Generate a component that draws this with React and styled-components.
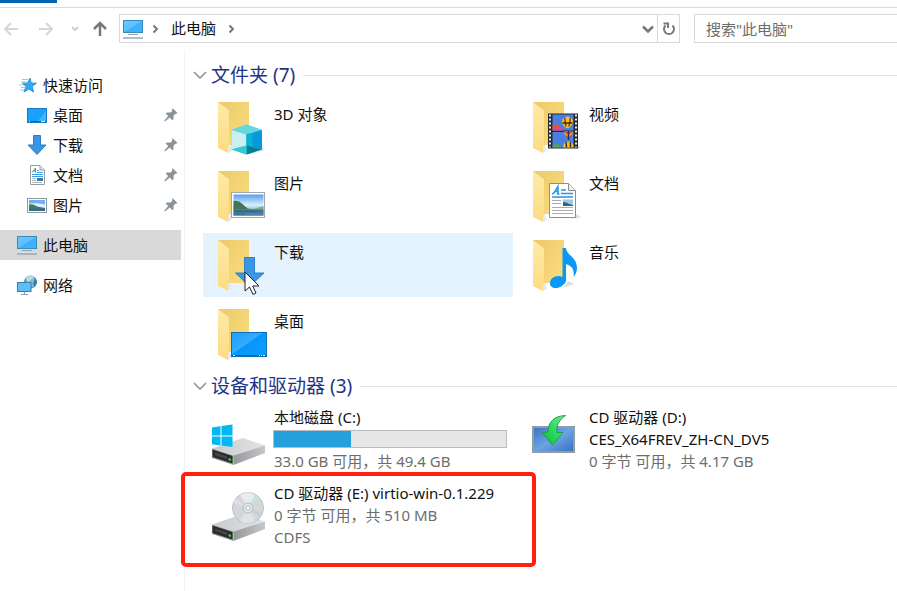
import React from "react";
import styled, { createGlobalStyle } from "styled-components";

const Global = createGlobalStyle`
  * { box-sizing: border-box; }
  body {
    margin: 0;
    background: #fff;
    color: #111;
    font-family: "Noto Sans", "Noto Sans CJK SC", sans-serif;
    font-size: 15px;
    line-height: 22px;
    overflow: hidden;
  }
  button, input { font: inherit; color: inherit; }
  svg { display: block; flex: none; }
`;

const Window = styled.div`
  display: flex;
  flex-direction: column;
  min-height: 100vh;
`;

const TabStrip = styled.header`
  height: 8px;
  border-bottom: 1px solid #dadbdc;
`;

const ActiveTab = styled.div`
  width: 57px;
  height: 3px;
  background: #0063b1;
`;

const Toolbar = styled.nav`
  display: flex;
  align-items: center;
  height: 42px;
  padding: 0 0 1px;
`;

const NavButtons = styled.div`
  display: flex;
  align-items: center;
  width: 119px;
  flex: none;
`;

const IconButton = styled.button`
  display: flex;
  align-items: center;
  justify-content: center;
  width: ${(p) => p.$width}px;
  height: 27px;
  padding: 0;
  border: 0;
  background: none;
`;

const AddressBar = styled.div`
  display: flex;
  align-items: center;
  flex: 1;
  height: 29px;
  border: 1px solid #d9d9d9;
`;

const Crumb = styled.button`
  border: 0;
  background: none;
  padding: 0 8px 2px 6px;
`;

const Spacer = styled.div`
  flex: 1;
`;

const RefreshSlot = styled.div`
  border-left: 1px solid #d9d9d9;
`;

const Search = styled.input`
  width: 203px;
  height: 29px;
  margin-left: 14px;
  padding: 0 11px;
  border: 1px solid #d9d9d9;
  border-right: 0;
  outline: 0;
  background: #fff;
  &::placeholder { color: #6d6d6d; opacity: 1; }
`;

const Body = styled.div`
  display: flex;
  flex: 1;
`;

const Sidebar = styled.aside`
  display: flex;
  flex-direction: column;
  gap: 10px;
  width: 185px;
  flex: none;
  padding: 20px 3px 0 0;
  border-right: 1px solid #f3f3f3;
`;

const SideGroup = styled.div`
  display: flex;
  flex-direction: column;
`;

const SideLink = styled.a`
  display: flex;
  align-items: center;
  gap: 6px;
  height: 30px;
  padding: 0 3px 0 ${(p) => (p.$nested ? 27 : 17)}px;
  background: ${(p) => (p.$current ? "#d9d9d9" : "transparent")};
  color: inherit;
  text-decoration: none;
`;

const Main = styled.main`
  flex: 1;
  min-width: 0;
  padding: 13px 0 0 7px;
`;

const Section = styled.section`
  margin-bottom: 8px;
`;

const SectionHead = styled.div`
  display: flex;
  align-items: center;
  height: 24px;
  &::after {
    content: "";
    flex: 1;
    height: 1px;
    margin-left: 8px;
    background: #e2e2e2;
  }
`;

const SectionTitle = styled.h2`
  margin: 0 0 0 4px;
  color: #1e3287;
  font-size: 19px;
  font-weight: 400;
  line-height: 24px;
`;

const Tiles = styled.div`
  display: grid;
  grid-template-columns: repeat(2, 310px);
  gap: 5px;
  padding: ${(p) => p.$top}px 0 0 11px;
`;

const TileBox = styled.button`
  position: relative;
  display: flex;
  align-items: flex-start;
  gap: 7px;
  height: ${(p) => (p.$tall ? 71 : 64)}px;
  padding: 0 6px 0 8px;
  border: 0;
  background: ${(p) => (p.$hover ? "#e5f3ff" : "transparent")};
  text-align: left;
`;

const IconSlot = styled.span`
  flex: none;
  padding-top: ${(p) => (p.$tall ? 6 : 4)}px;
`;

const TileText = styled.span`
  display: flex;
  flex-direction: column;
  flex: 1;
  padding-top: ${(p) => (p.$tall ? 0 : 8)}px;
  white-space: nowrap;
`;

const Detail = styled.span`
  color: #6d6d6d;
`;

const Meter = styled.span`
  display: block;
  height: 18px;
  margin: 2px 0;
  margin-left: -1px;
  border: 1px solid #bcbcbc;
  background: #e6e6e6;
`;

const MeterFill = styled.span`
  display: block;
  height: 100%;
  background: #26a0da;
`;

const Highlight = styled.span`
  position: absolute;
  inset: -10px -23px -14px -22px;
  border: 4px solid #ff2010;
  border-radius: 5px;
  pointer-events: none;
`;

const PointerMark = styled.span`
  position: absolute;
  left: 41px;
  top: 38px;
`;

const Stroke = ({ w, h, d, color, sw = 2 }) => (
  <svg width={w} height={h} viewBox={`0 0 ${w} ${h}`} fill="none" stroke={color} strokeWidth={sw}>
    <path d={d} />
  </svg>
);

const Back = () => <Stroke w={16} h={16} d="M15 8H2M8 2L2 8l6 6" color="#d6d6d6" />;
const Forward = () => <Stroke w={16} h={16} d="M1 8h13M8 2l6 6-6 6" color="#d6d6d6" />;
const Recent = () => <Stroke w={8} h={8} d="M1 2l3 3 3-3" color="#d0d0d0" />;
const Up = () => <Stroke w={16} h={16} d="M8 15V2M2 8l6-6 6 6" color="#777" sw={2.5} />;
const CrumbArrow = () => <Stroke w={7} h={10} d="M1.5 1.5L5 5 1.5 8.5" color="#777" />;
const Drop = () => <Stroke w={12} h={10} d="M1 2.500l5 5 5-5" color="#777" sw={2.5} />;
const SectionArrow = () => <Stroke w={14} h={10} d="M1 2l6 6 6-6" color="#8b8b8b" sw={1.5} />;
const Refresh = () => (
  <svg width="14" height="15" viewBox="0 0 14 15" fill="none" stroke="#777" strokeWidth="2">
    <path d="M10.500 4.500A5 5 0 1 1 3.500 4.500M1.500 2.500H6V7" />
  </svg>
);

const ScreenIcon = () => (
  <svg width="20" height="20" viewBox="0 0 20 20">
    <defs>
      <linearGradient id="scr" x1="0" y1="0" x2="1" y2="1">
        <stop offset="0" stopColor="#6cc7ff" />
        <stop offset=".5" stopColor="#5bc0ff" />
        <stop offset=".52" stopColor="#3bb1fb" />
        <stop offset="1" stopColor="#40b6ff" />
      </linearGradient>
    </defs>
    <rect x=".5" y="1.500" width="19" height="12" fill="url(#scr)" stroke="#3f89b5" />
    <path d="M5 15.500h10" stroke="#8fa3b0" />
    <path d="M0 19h20" stroke="#93a9b8" strokeWidth="1.500" />
  </svg>
);

const StarIcon = () => (
  <svg width="20" height="20" viewBox="0 0 20 20">
    <path d="M5 4.500h6M4 7h6M2 10h6M4 12.500h4M3 15h5" stroke="#8fcbf0" />
    <path d="M13 3l1.300 5 5.200.2-4.200 3.100 1.200 5.700-4.700-3-4.900 3 2.200-5.500L5.500 8.200h5z" fill="#2fa9f3" stroke="#1b87cf" strokeWidth=".8" />
  </svg>
);

const DesktopIcon = () => (
  <svg width="20" height="20" viewBox="0 0 20 20">
    <rect x=".5" y="3.500" width="19" height="14" fill="#18a2fb" stroke="#167bc4" />
    <path d="M10 17L19 6v11z" fill="#42b5ff" />
    <path d="M1 16.500h18" stroke="#0c619f" />
    <path d="M2 16.500h1M14 16.500h4" stroke="#d7efff" />
  </svg>
);

const DownIcon = () => (
  <svg width="20" height="20" viewBox="0 0 20 20">
    <path d="M6.500.500h7v9.500h5.500L10 19.500 1 10h5.500z" fill="#3a96e4" stroke="#2b7cc8" />
  </svg>
);

const DocIcon = () => (
  <svg width="20" height="20" viewBox="0 0 20 20">
    <path d="M3.500.500H13l4.500 4.500v14.500h-14z" fill="#fff" stroke="#979ca0" />
    <path d="M13 .5V5h4.500" fill="#e4e6e8" stroke="#979ca0" />
    <path d="M5 7.500L8.500 3v4.500M6.500 6h2" stroke="#2c93d8" fill="none" />
    <path d="M10 5.500h2M10 7.500h6M5 9.500h11M5 11.500h11" stroke="#3da0e0" />
    <path d="M5 13.500h4M5 15.500h4M5 17.500h10" stroke="#aeb6bc" />
    <path d="M10 13h6v3h-6z" fill="#41789a" />
  </svg>
);

const PictureIcon = () => (
  <svg width="20" height="20" viewBox="0 0 20 20">
    <rect x=".5" y="3.500" width="19" height="14" fill="#fff" stroke="#92979b" />
    <path d="M2 5h16v11H2z" fill="#6fb0f2" />
    <path d="M2 8.500q9-1 16 1V13H2z" fill="#dcf0fb" />
    <path d="M2 9.500q4-1 8 2l8 1.500v1H2z" fill="#407c58" />
    <path d="M2 13.500h16V16H2z" fill="#376b96" />
  </svg>
);

const NetworkIcon = () => (
  <svg width="20" height="20" viewBox="0 0 20 20">
    <circle cx="13.500" cy="7" r="6.500" fill="#5b9bb9" />
    <path d="M9 3q4-4 8-1l-2 4-5 1z" fill="#b9dce8" />
    <path d="M13 5l4-2 2 4-3 5-2-1z" fill="#84bdd0" />
    <path d="M18 3l2 4-2 5-2-3z" fill="#337fa5" />
    <rect x=".5" y="7.500" width="13.500" height="9" fill="#5dbef9" stroke="#397fa9" />
    <path d="M7.500 17v2M4 19.500h7" stroke="#88a5b6" />
  </svg>
);

const PinIcon = () => (
  <svg width="14" height="14" viewBox="0 0 14 14">
    <path d="M8.500 0l5 5-1.500.8-1 .1-1.500 1.800.1 3.300-1.300 1.200-2.500-2.700L1 13.500.2 12.800l4-4.700L1.600 5.600 3 4.400l3.400.2L8 3.200z" fill="#8a9399" />
  </svg>
);

const Folder = ({ children }) => (
  <svg width="56" height="56" viewBox="0 0 56 56">
    <defs>
      <linearGradient id="fb" x1="0" y1="0" x2="1" y2="1">
        <stop offset="0" stopColor="#ecca6a" />
        <stop offset="1" stopColor="#fbdd7f" />
      </linearGradient>
      <linearGradient id="ff" x1="0" y1="0" x2="0" y2="1">
        <stop offset="0" stopColor="#ffeaa8" />
        <stop offset="1" stopColor="#fbdc80" />
      </linearGradient>
      <linearGradient id="sea" x1="0" y1="0" x2="0" y2="1">
        <stop offset="0" stopColor="#579df0" />
        <stop offset=".5" stopColor="#d8effb" />
        <stop offset="1" stopColor="#4f8fb8" />
      </linearGradient>
      <linearGradient id="desk" x1="0" y1="0" x2="1" y2="1">
        <stop offset="0" stopColor="#1a9dff" />
        <stop offset=".45" stopColor="#35acff" />
        <stop offset=".46" stopColor="#0797fb" />
        <stop offset="1" stopColor="#0c9bff" />
      </linearGradient>
    </defs>
    <path d="M17 54l4-2-2-6h-2z" fill="#e9e9e9" />
    <path d="M7 3h31v43H17z" fill="url(#fb)" />
    <path d="M7 3l11 8.500v31L17 46v8L7 49z" fill="url(#ff)" />
    {children}
  </svg>
);

const Objects3D = () => (
  <Folder>
    <path d="M36 56l18-5-3-3z" fill="#e3e3e3" />
    <path d="M35.500 25.500L51 31v19.500l-15.500 5-15-5V31z" fill="#45cfdc" />
    <path d="M35.500 25.500L51 31l-15.500 4.500-15-4.500z" fill="#66d6e3" />
    <path d="M20.500 31l15 4.500v11l-15 4z" fill="#c9eff1" />
    <path d="M35.500 35.500L51 31v19.500l-15.500-4z" fill="#0799dc" />
    <path d="M35.500 35.500l6-1.700v14.300l-6-1.600z" fill="#08b3d3" />
    <path d="M35.500 46.500l15.500 4-15.500 5z" fill="#057c92" />
    <path d="M35.500 46.500l-15 4 15 5z" fill="#35c9d6" />
  </Folder>
);

const Pictures = () => (
  <Folder>
    <rect x="20.500" y="24.500" width="33" height="25" fill="#fff" stroke="#a2a7ab" />
    <path d="M22.500 26.500h30v21h-30z" fill="url(#sea)" />
    <path d="M22.500 38q9 0 15 2l5 1 10-3v4h-30z" fill="#7fa79a" />
    <path d="M22.500 33q5-1 9 3l6 5.500h-15z" fill="#41755a" />
    <path d="M22.500 41.500h30v6h-30z" fill="#3f7597" />
    <path d="M24 43h20" stroke="#2f6570" />
    <path d="M34 46h18" stroke="#5f97b3" />
  </Folder>
);

const Videos = () => (
  <Folder>
    <path d="M50 50l5-1-3-3z" fill="#ddd" />
    <path d="M22 14.500h30v35H22z" fill="#26292c" />
    <path d="M26.500 15.500h21v16h-21zM26.500 33h21v15.500h-21z" fill="#477fe2" />
    <path d="M26.500 26l4-1 3 2 3 4.500h-10z" fill="#e1513f" />
    <path d="M28 31.500l3-3 6 1-1 2z" fill="#cd4b9b" />
    <path d="M36 23a5.500 5.500 0 0 1 11 0q0 2.500-4 6h-3q-4-3.500-4-6z" fill="#f7c21f" />
    <path d="M38.500 18.500l1.500 9M44.500 18.500l-1.500 9" stroke="#8d3324" strokeWidth="1.500" />
    <path d="M36.500 24h10" stroke="#35291a" strokeWidth="1.500" />
    <path d="M37.500 32h10q-1 4-4 7h-2q-3-3-4-7z" fill="#d94a2e" />
    <path d="M38 34l4.500 3 4-3" stroke="#f3b52a" strokeWidth="1.500" fill="none" />
    <path d="M42.500 32v9" stroke="#27305d" strokeWidth="1.500" />
    <path d="M37 48.500q0-6 5.500-6t5 6z" fill="#f5c127" />
    <path d="M40 43l.5 5.500M44.500 43v5.500" stroke="#37352a" strokeWidth="1.500" />
    <path d="M26.500 46l6-1 3 3.500h-9z" fill="#53a44c" />
    <path d="M24 15.500v33M50 15.500v33" stroke="#e6e8e9" strokeWidth="2" strokeDasharray="2 2" />
  </Folder>
);

const Documents = () => (
  <Folder>
    <path d="M49 51l6-2-5-3z" fill="#ddd" />
    <path d="M23.500 15.500h19l7 7v27h-26z" fill="#fff" stroke="#8a8f93" />
    <path d="M42.500 15.500v7h7" fill="#eceeef" stroke="#8a8f93" />
    <path d="M26 26l2-1 4-6.500V26M29 23.500h3M31 26h2.500" stroke="#2c93d8" strokeWidth="1.500" fill="none" />
    <path d="M35 22h5M35 25.500h12M26 29h21" stroke="#2c93d8" strokeWidth="1.500" />
    <path d="M26 32.500h9M26 35.500h9M26 39.500h21M26 42.500h21M26 45.500h21" stroke="#a8adb1" />
    <path d="M37 31.500h10v6.500H37z" fill="#97c9ea" />
    <path d="M37 34q4 0 6 2l4 1v1H37z" fill="#316774" />
  </Folder>
);

const Downloads = () => (
  <Folder>
    <path d="M33.500 20.500h10V36H53L38.500 49.500 24.500 36h9z" fill="#3d95e3" stroke="#2d7fca" />
  </Folder>
);

const Music = () => (
  <Folder>
    <path d="M36 51l12-4-5-3z" fill="#dedede" />
    <path d="M36.500 11h3.500c0 7 11 9 11 20q0 5-3.500 9 2-10-7.500-13v15a8.500 6.500 0 0 1-3 6c-5 5-13 3.500-13-1.500 0-6 7-9 12.500-6.500z" fill="#0998f5" />
  </Folder>
);

const Desktop = () => (
  <Folder>
    <rect x="20.500" y="26.500" width="35" height="24" fill="url(#desk)" stroke="#0a6fb9" />
    <path d="M21 49.500h34" stroke="#06659e" />
    <path d="M22 49.500h2M48 49.500h1M50 49.500h1M52 49.500h2" stroke="#d6f0ff" />
  </Folder>
);

const DriveBody = () => (
  <>
    <defs>
      <linearGradient id="top" x1="0" y1="0" x2="1" y2="0">
        <stop offset="0" stopColor="#c9cacc" />
        <stop offset="1" stopColor="#e2e3e5" />
      </linearGradient>
      <linearGradient id="side" x1="0" y1="0" x2="1" y2="0">
        <stop offset="0" stopColor="#97989b" />
        <stop offset="1" stopColor="#c6c7c9" />
      </linearGradient>
    </defs>
    <path d="M1 36.500L32 26l22 7.500-31.500 10z" fill="url(#top)" />
    <path d="M22.500 43.500L54 33.500V41L22.500 53z" fill="url(#side)" />
    <path d="M1 36.500l21.500 7V53L1 46z" fill="#9a9c9e" />
    <path d="M1.500 37.500l20 6.500v7.500l-20-6.500z" fill="#292b2d" />
    <path d="M4 40.500l12 4v2.500L4 43z" fill="#454749" />
    <path d="M17.500 46l2.500.8v2.200l-2.500-.8z" fill="#3bd63b" />
  </>
);

const LocalDrive = () => (
  <svg width="56" height="56" viewBox="0 0 56 56">
    <DriveBody />
    <path d="M1 15.500l8.500-1.200v9.200H1zM10.500 14.100L21.500 12.500v11h-11zM1 24.500h8.500v9L1 32.300zM10.500 24.500h11v10.500l-11-1.500z" fill="#00b7f1" />
  </svg>
);

const DiscDrive = () => (
  <svg width="56" height="56" viewBox="0 0 56 56">
    <DriveBody />
    <circle cx="37" cy="20" r="15.500" fill="#d3d7da" stroke="#bcc1c5" />
    <path d="M37 20L29 7q8-5 15 0z" fill="#e9eceb" />
    <path d="M37 20l7-13 5 3z" fill="#c2e7d9" />
    <path d="M37 20L22 15l3-5z" fill="#e6d9ec" />
    <path d="M37 20l-8 13q8 5 15 0z" fill="#e0e3e5" />
    <path d="M37 20l15 5-3 5z" fill="#c8d0d6" />
    <circle cx="37" cy="20" r="5" fill="#e2e5e7" stroke="#b4babe" />
    <circle cx="37" cy="20" r="2" fill="#fff" stroke="#b4babe" />
  </svg>
);

const InstallDisc = () => (
  <svg width="56" height="56" viewBox="0 0 56 56">
    <defs>
      <linearGradient id="inst" x1="0" y1="0" x2="1" y2="1">
        <stop offset="0" stopColor="#3973bd" />
        <stop offset=".5" stopColor="#6ca3e4" />
        <stop offset="1" stopColor="#3670bc" />
      </linearGradient>
      <linearGradient id="arr" x1="1" y1="0" x2="0" y2="1">
        <stop offset="0" stopColor="#7ee69a" />
        <stop offset=".5" stopColor="#2bdc5c" />
        <stop offset="1" stopColor="#12b43a" />
      </linearGradient>
    </defs>
    <rect x="7" y="15" width="41" height="25" fill="url(#inst)" stroke="#929ca6" strokeWidth="2" />
    <path d="M39.500 3.500C28 4 22 10 22 20l-6 .5L26.500 33 37 20.500h-6C30 14 33 8 39.500 3.500z" fill="url(#arr)" stroke="#2a9a4a" />
  </svg>
);

const Pointer = () => (
  <svg width="16" height="25" viewBox="0 0 16 25">
    <path d="M1 1v19l4.500-4 3.500 7.500 3-1.500-3.300-7H15z" fill="#fff" stroke="#222" />
  </svg>
);

const quickAccess = [
  ["桌面", DesktopIcon],
  ["下载", DownIcon],
  ["文档", DocIcon],
  ["图片", PictureIcon],
];

const folders = [
  { name: "3D 对象", Icon: Objects3D },
  { name: "视频", Icon: Videos },
  { name: "图片", Icon: Pictures },
  { name: "文档", Icon: Documents },
  { name: "下载", Icon: Downloads, hover: true },
  { name: "音乐", Icon: Music },
  { name: "桌面", Icon: Desktop },
];

const drives = [
  { name: "本地磁盘 (C:)", Icon: LocalDrive, used: 33, details: ["33.0 GB 可用，共 49.4 GB"] },
  { name: "CD 驱动器 (D:)", label: "CES_X64FREV_ZH-CN_DV5", Icon: InstallDisc, details: ["0 字节 可用，共 4.17 GB"] },
  { name: "CD 驱动器 (E:) virtio-win-0.1.229", Icon: DiscDrive, marked: true, details: ["0 字节 可用，共 510 MB", "CDFS"] },
];

const Tile = ({ name, label, Icon, hover, used, details = [], marked, tall }) => (
  <TileBox type="button" $hover={hover} $tall={tall}>
    <IconSlot $tall={tall}><Icon /></IconSlot>
    <TileText $tall={tall}>
      <span>{name}</span>
      {label && <span>{label}</span>}
      {used && (
        <Meter role="meter" aria-label={name} aria-valuenow={used} aria-valuemin={0} aria-valuemax={100}>
          <MeterFill style={{ width: `${used}%` }} />
        </Meter>
      )}
      {details.map((line) => <Detail key={line}>{line}</Detail>)}
    </TileText>
    {hover && <PointerMark><Pointer /></PointerMark>}
    {marked && <Highlight />}
  </TileBox>
);

const Group = ({ title, items, top, tall }) => (
  <Section>
    <SectionHead>
      <IconButton $width={15} type="button" aria-label={`折叠 ${title}`}><SectionArrow /></IconButton>
      <SectionTitle>{title}</SectionTitle>
    </SectionHead>
    <Tiles $top={top}>
      {items.map((item) => <Tile key={item.name} {...item} tall={tall} />)}
    </Tiles>
  </Section>
);

export default function App() {
  return (
    <Window>
      <Global />
      <TabStrip><ActiveTab /></TabStrip>
      <Toolbar>
        <NavButtons>
          <IconButton $width={23} type="button" aria-label="后退"><Back /></IconButton>
          <IconButton $width={50} type="button" aria-label="前进"><Forward /></IconButton>
          <IconButton $width={10} type="button" aria-label="最近"><Recent /></IconButton>
          <IconButton $width={40} type="button" aria-label="向上"><Up /></IconButton>
        </NavButtons>
        <AddressBar>
          <IconButton $width={25} type="button" aria-label="位置"><ScreenIcon /></IconButton>
          <IconButton $width={20} type="button" aria-label="展开"><CrumbArrow /></IconButton>
          <Crumb type="button">此电脑</Crumb>
          <IconButton $width={14} type="button" aria-label="展开"><CrumbArrow /></IconButton>
          <Spacer />
          <IconButton $width={18} type="button" aria-label="历史"><Drop /></IconButton>
          <RefreshSlot>
            <IconButton $width={21} type="button" aria-label="刷新"><Refresh /></IconButton>
          </RefreshSlot>
        </AddressBar>
        <Search aria-label="搜索" placeholder={'搜索"此电脑"'} />
      </Toolbar>
      <Body>
        <Sidebar>
          <SideGroup>
            <SideLink href="#quick"><StarIcon />快速访问</SideLink>
            {quickAccess.map(([name, Icon]) => (
              <SideLink key={name} href={`#${name}`} $nested>
                <Icon />{name}<Spacer /><PinIcon />
              </SideLink>
            ))}
          </SideGroup>
          <SideLink href="#pc" $current><ScreenIcon />此电脑</SideLink>
          <SideLink href="#network"><NetworkIcon />网络</SideLink>
        </Sidebar>
        <Main>
          <Group title="文件夹 (7)" items={folders} top={8} />
          <Group title="设备和驱动器 (3)" items={drives} top={8} tall />
        </Main>
      </Body>
    </Window>
  );
}
